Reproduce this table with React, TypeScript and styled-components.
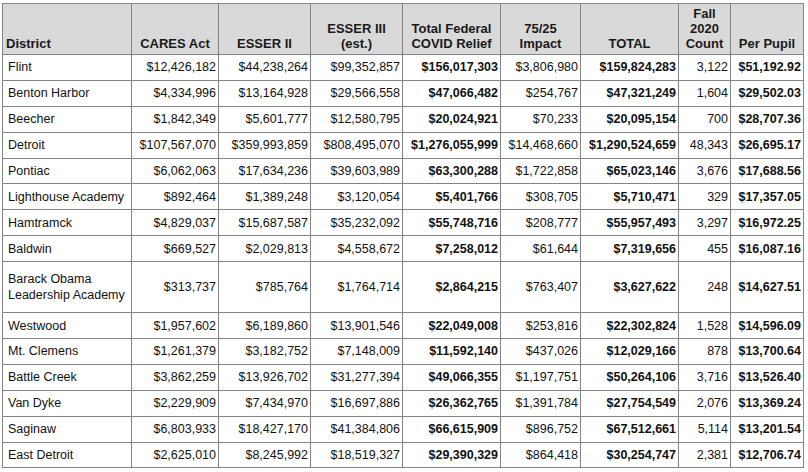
import React from "react";
import styled, { createGlobalStyle } from "styled-components";

const GlobalStyle = createGlobalStyle`
  html, body {
    margin: 0;
    padding: 0;
    background: #fff;
  }
  body {
    font-family: "Liberation Sans", Arial, sans-serif;
  }
`;

type Row = {
  district: string;
  cares: string;
  esser2: string;
  esser3: string;
  federal: string;
  impact: string;
  total: string;
  count: string;
  perPupil: string;
  tall?: boolean;
};

const rows: Row[] = [
  { district: "Flint", cares: "$12,426,182", esser2: "$44,238,264", esser3: "$99,352,857", federal: "$156,017,303", impact: "$3,806,980", total: "$159,824,283", count: "3,122", perPupil: "$51,192.92" },
  { district: "Benton Harbor", cares: "$4,334,996", esser2: "$13,164,928", esser3: "$29,566,558", federal: "$47,066,482", impact: "$254,767", total: "$47,321,249", count: "1,604", perPupil: "$29,502.03" },
  { district: "Beecher", cares: "$1,842,349", esser2: "$5,601,777", esser3: "$12,580,795", federal: "$20,024,921", impact: "$70,233", total: "$20,095,154", count: "700", perPupil: "$28,707.36" },
  { district: "Detroit", cares: "$107,567,070", esser2: "$359,993,859", esser3: "$808,495,070", federal: "$1,276,055,999", impact: "$14,468,660", total: "$1,290,524,659", count: "48,343", perPupil: "$26,695.17" },
  { district: "Pontiac", cares: "$6,062,063", esser2: "$17,634,236", esser3: "$39,603,989", federal: "$63,300,288", impact: "$1,722,858", total: "$65,023,146", count: "3,676", perPupil: "$17,688.56" },
  { district: "Lighthouse Academy", cares: "$892,464", esser2: "$1,389,248", esser3: "$3,120,054", federal: "$5,401,766", impact: "$308,705", total: "$5,710,471", count: "329", perPupil: "$17,357.05" },
  { district: "Hamtramck", cares: "$4,829,037", esser2: "$15,687,587", esser3: "$35,232,092", federal: "$55,748,716", impact: "$208,777", total: "$55,957,493", count: "3,297", perPupil: "$16,972.25" },
  { district: "Baldwin", cares: "$669,527", esser2: "$2,029,813", esser3: "$4,558,672", federal: "$7,258,012", impact: "$61,644", total: "$7,319,656", count: "455", perPupil: "$16,087.16" },
  { district: "Barack Obama Leadership Academy", cares: "$313,737", esser2: "$785,764", esser3: "$1,764,714", federal: "$2,864,215", impact: "$763,407", total: "$3,627,622", count: "248", perPupil: "$14,627.51", tall: true },
  { district: "Westwood", cares: "$1,957,602", esser2: "$6,189,860", esser3: "$13,901,546", federal: "$22,049,008", impact: "$253,816", total: "$22,302,824", count: "1,528", perPupil: "$14,596.09" },
  { district: "Mt. Clemens", cares: "$1,261,379", esser2: "$3,182,752", esser3: "$7,148,009", federal: "$11,592,140", impact: "$437,026", total: "$12,029,166", count: "878", perPupil: "$13,700.64" },
  { district: "Battle Creek", cares: "$3,862,259", esser2: "$13,926,702", esser3: "$31,277,394", federal: "$49,066,355", impact: "$1,197,751", total: "$50,264,106", count: "3,716", perPupil: "$13,526.40" },
  { district: "Van Dyke", cares: "$2,229,909", esser2: "$7,434,970", esser3: "$16,697,886", federal: "$26,362,765", impact: "$1,391,784", total: "$27,754,549", count: "2,076", perPupil: "$13,369.24" },
  { district: "Saginaw", cares: "$6,803,933", esser2: "$18,427,170", esser3: "$41,384,806", federal: "$66,615,909", impact: "$896,752", total: "$67,512,661", count: "5,114", perPupil: "$13,201.54" },
  { district: "East Detroit", cares: "$2,625,010", esser2: "$8,245,992", esser3: "$18,519,327", federal: "$29,390,329", impact: "$864,418", total: "$30,254,747", count: "2,381", perPupil: "$12,706.74" },
];

const colWidths = [129, 87, 92, 92, 98, 80, 98, 52, 73];

function App() {
  return (
    <Page>
      <GlobalStyle />
      <Table>
        <colgroup>
          {colWidths.map((w, i) => (
            <col key={i} style={{ width: w }} />
          ))}
        </colgroup>
        <thead>
          <tr>
            <HeadCell $align="left">District</HeadCell>
            <HeadCell>CARES Act</HeadCell>
            <HeadCell>ESSER II</HeadCell>
            <HeadCell>
              ESSER III
              <br />
              (est.)
            </HeadCell>
            <HeadCell>
              Total Federal
              <br />
              COVID Relief
            </HeadCell>
            <HeadCell>
              75/25
              <br />
              Impact
            </HeadCell>
            <HeadCell>TOTAL</HeadCell>
            <HeadCell>
              Fall
              <br />
              2020
              <br />
              Count
            </HeadCell>
            <HeadCell>Per Pupil</HeadCell>
          </tr>
        </thead>
        <tbody>
          {rows.map((r) => (
            <BodyRow key={r.district} $tall={r.tall}>
              <NameCell>
                {r.tall ? (
                  <>
                    Barack Obama
                    <br />
                    Leadership Academy
                  </>
                ) : (
                  r.district
                )}
              </NameCell>
              <Cell>{r.cares}</Cell>
              <Cell>{r.esser2}</Cell>
              <Cell>{r.esser3}</Cell>
              <Cell $bold>{r.federal}</Cell>
              <Cell>{r.impact}</Cell>
              <Cell $bold>{r.total}</Cell>
              <Cell>{r.count}</Cell>
              <Cell $bold>{r.perPupil}</Cell>
            </BodyRow>
          ))}
        </tbody>
      </Table>
    </Page>
  );
}

export default App;

const Page = styled.div`
  padding: 3px 0 0 2px;
  width: 808px;
  height: 472px;
  box-sizing: border-box;
  background: #fff;
`;

const Table = styled.table`
  border-collapse: collapse;
  table-layout: fixed;
  width: 801px;
  font-family: "Liberation Sans", Arial, sans-serif;
  font-size: 12.5px;
  color: #111;
`;

const HeadCell = styled.th<{ $align?: "left" | "center" }>`
  height: 47px;
  padding: 0 3px 3px;
  background: #d9d9d9;
  border: 1px solid #858585;
  vertical-align: bottom;
  text-align: ${(p) => p.$align || "center"};
  font-weight: bold;
  line-height: 15px;
  color: #1a1a1a;
  white-space: nowrap;
  font-size: 13px;
`;

const BodyRow = styled.tr<{ $tall?: boolean }>`
  height: ${(p) => (p.$tall ? "51px" : "25.9px")};
`;

const Cell = styled.td<{ $bold?: boolean }>`
  padding: 0 2px 0 2px;
  border: 1px solid #858585;
  text-align: right;
  vertical-align: middle;
  font-weight: ${(p) => (p.$bold ? "bold" : "normal")};
  white-space: nowrap;
  line-height: 16px;
`;

const NameCell = styled(Cell)`
  text-align: left;
  padding-left: 5px;
`;
